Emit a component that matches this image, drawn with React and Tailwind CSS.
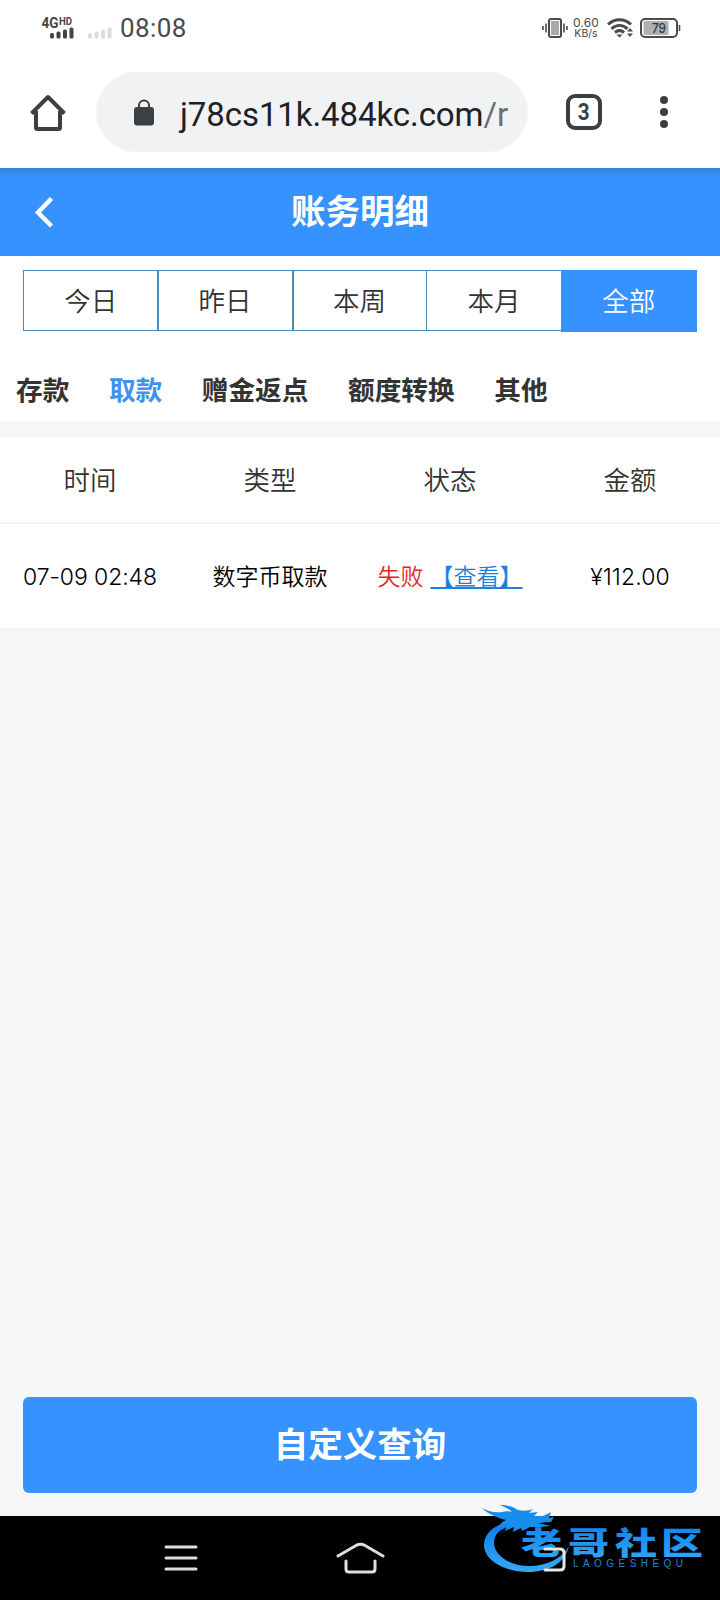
const RANGES = ["今日", "昨日", "本周", "本月", "全部"];
const TABS = ["存款", "取款", "赠金返点", "额度转换", "其他"];
const COLUMNS = ["时间", "类型", "状态", "金额"];

const RECORDS = [
    { id: 1, time: "07-09 02:48", type: "数字币取款", status: "失败", amount: "¥112.00" },
];

function StatusBar() {
    return (
        <div className="flex h-14 items-center justify-between pl-[41px] pr-[39px] text-[#4a4a4a]">
            <div className="flex items-center">
                {/* Network type and signal of both SIM cards */}
                <svg width="72" height="24" viewBox="0 0 72 24" fill="#444">
                    <text x="0.5" y="12" fontSize="14" fontWeight="700" fontFamily="Roboto, sans-serif" textLength="17" lengthAdjust="spacingAndGlyphs">4G</text>
                    <text x="18" y="9" fontSize="10" fontWeight="700" fontFamily="Roboto, sans-serif" textLength="13" lengthAdjust="spacingAndGlyphs">HD</text>
                    <rect x="9" y="17" width="4" height="5.5" rx="1.5" />
                    <rect x="15.5" y="15.5" width="4" height="7" rx="1.5" />
                    <rect x="22" y="13.5" width="4" height="9" rx="1.5" />
                    <rect x="28.5" y="11.5" width="4" height="11" rx="1.5" />
                    <g fill="#dcdcdc">
                        <rect x="47" y="17" width="4" height="5.5" rx="1.5" />
                        <rect x="53.5" y="15.5" width="4" height="7" rx="1.5" />
                        <rect x="60" y="13.5" width="4" height="9" rx="1.5" />
                        <rect x="66.5" y="11.5" width="4" height="11" rx="1.5" />
                    </g>
                </svg>
                <span className="ml-[7px] font-[Roboto,sans-serif] text-[26px] leading-none tracking-[0.4px]">08:08</span>
            </div>

            <div className="flex items-center">
                <svg width="26" height="20" viewBox="0 0 26 20" fill="none" stroke="#4a4a4a" strokeWidth="1.6">
                    <rect x="7" y="1" width="12" height="18" rx="2" strokeWidth="2" />
                    <rect x="9" y="3" width="8" height="14" fill="#aaa" stroke="none" />
                    <path d="M1 8v4M4 5.5v9M22 5.5v9M25 8v4" />
                </svg>
                <div className="ml-1 flex w-[28px] flex-col items-center font-[Inter,sans-serif] text-[10.5px] leading-[11px]">
                    <span className="text-[12px] tracking-[0.2px]">0.60</span>
                    <span>KB/s</span>
                </div>
                <svg className="ml-[7px]" width="26" height="20" viewBox="0 0 26 20" fill="none" stroke="#4a4a4a" strokeWidth="3">
                    <path d="M1 6.5C8 .2 17 .2 24 6.5" />
                    <path d="M4.500 10.800c5-4.400 11-4.400 16 0" />
                    <path d="M8 14.500c3-2.500 6-2.500 9 0" />
                    <path d="M9.500 16.500h6l-3 3zM20 13.500l3-3.500 3 3.500zM20 15.500l3 3.500 3-3.500z" fill="#4a4a4a" stroke="none" />
                </svg>
                <svg className="ml-[7px]" width="41" height="20" viewBox="0 0 41 20">
                    <rect x="1" y="1" width="36" height="18" rx="4" fill="none" stroke="#4a4a4a" strokeWidth="2" />
                    <rect x="3.5" y="3" width="25" height="14" rx="1.5" fill="#b0b0b0" />
                    <path d="M39.5 7v6" stroke="#4a4a4a" strokeWidth="1.6" />
                    <text x="19" y="14.5" fontSize="13" fontFamily="Inter, sans-serif" textAnchor="middle" fill="#333" stroke="#333" strokeWidth="0.2" textLength="14" lengthAdjust="spacingAndGlyphs">79</text>
                </svg>
            </div>
        </div>
    );
}

function BrowserBar() {
    return (
        <div className="flex h-28 items-center pl-[30px] pr-[52px]">
            <svg width="36" height="37" viewBox="0 0 36 37" fill="none" stroke="#3c4043" strokeWidth="4" strokeLinejoin="round">
                <path d="M1.5 19.5 18 3l16.5 16.5" />
                <path d="M6 17v16.5a1.5 1.5 0 0 0 1.5 1.5h21a1.5 1.5 0 0 0 1.5-1.5V17" />
            </svg>

            <div className="ml-[30px] flex h-20 w-[432px] items-center rounded-full bg-[#f1f2f4] pl-[38px]">
                <svg width="20" height="27" viewBox="0 0 20 27">
                    <path d="M5 9V6.5a5 5 0 0 1 10 0V9" fill="none" stroke="#3c4043" strokeWidth="2" />
                    <rect y="8" width="20" height="18.5" rx="3" fill="#3c4043" />
                </svg>
                <span className="ml-[26px] whitespace-nowrap pt-1 font-[Roboto,sans-serif] text-[33px] leading-none tracking-[-0.08px] text-[#202124]">
                    j78cs11k.484kc.com<span className="text-[#6b6f73]">/r</span>
                </span>
            </div>

            <div className="ml-[38px] flex size-9 items-center justify-center rounded-[9px] border-4 border-[#3c4043] font-[Roboto,sans-serif] text-[23px] font-bold leading-none text-[#3c4043]">
                <span className="scale-x-90">3</span>
            </div>
            <div className="ml-auto flex flex-col gap-1">
                {[0, 1, 2].map((i) => (
                    <span key={i} className="size-2 rounded-full bg-[#3c4043]" />
                ))}
            </div>
        </div>
    );
}

function PageHeader() {
    return (
        <div className="grid h-[88px] grid-cols-[80px_1fr_80px] items-center bg-[#3592ff] bg-linear-to-b from-[#3383d8] via-[#3592ff] via-[10%] to-[#3592ff] text-white">
            <svg className="ml-[34px]" width="20" height="32" viewBox="0 0 20 32" fill="none" stroke="currentColor" strokeWidth="4.5">
                <path d="M17.5 2.5 4 16.5l13.5 13.5" />
            </svg>
            <h1 className="pb-[5px] text-center text-[34.5px] font-bold leading-none">账务明细</h1>
        </div>
    );
}

function Watermark() {
    return (
        <svg className="absolute bottom-4 right-4 overflow-visible" width="224" height="76" viewBox="0 0 224 76">
            <defs>
                <linearGradient id="mark" x1="0" y1="0" x2="0" y2="1">
                    <stop offset="0" stopColor="#087bee" />
                    <stop offset="1" stopColor="#35a9f5" />
                </linearGradient>
            </defs>
            {/* Dragon curled into a ring */}
            <path d="M30 14C14 16 4 26 4 37c0 16 22 27 44 27 21 0 37-9 41-26-7 12-21 20-40 20C28 58 14 46 14 35c0-9 6-15 18-17z" fill="url(#mark)" />
            <path d="M2 0c8 4 13 5 20 4 3-1 7-1 10 0-3-3-7-5-12-7 8 0 14 2 18 5 6 1 10 1 15-1l-4 4 9-1-4 4 9 0 8-4-2 6 5-1-3 5c-6 0-9 1-13 1l13 3c-8 1-15 1-21 1l-8 4-1-3-8 4 1-5-9 4 2-6-9 3c2-4 4-6 8-8C18 10 8 6 2 0z" fill="#178ded" />
            <g fontFamily="'Noto Sans CJK SC', sans-serif" fontSize="31" fontWeight="900" fill="url(#mark)">
                <text x="41" y="45.5" textLength="41" lengthAdjust="spacingAndGlyphs">老</text>
                <text x="88" y="45.5" textLength="41" lengthAdjust="spacingAndGlyphs">哥</text>
                <text x="135" y="45.5" textLength="42" lengthAdjust="spacingAndGlyphs">社</text>
                <text x="181" y="45.5" textLength="42" lengthAdjust="spacingAndGlyphs">区</text>
            </g>
            <text x="93" y="59" fontSize="10" fontFamily="'Liberation Sans', sans-serif" fill="#2585d3" textLength="110" lengthAdjust="spacing">
                LAOGESHEQU
            </text>
        </svg>
    );
}

function NavBar() {
    return (
        <div className="relative grid h-[84px] grid-cols-[361px_1fr] bg-black">
            <div className="flex items-center justify-center">
                <svg width="34" height="26" viewBox="0 0 34 26" stroke="#dedede" strokeWidth="3" strokeLinecap="round">
                    <path d="M2 2h30M2 13h30M2 24h30" />
                </svg>
            </div>
            <div className="flex items-center">
                <svg className="-ml-[25px]" width="49" height="32" viewBox="0 0 49 32" fill="none" stroke="#dedede" strokeWidth="3" strokeLinecap="round">
                    <path d="M2 14 20 3.5q4.5-2.5 9 0L47 14" />
                    <path d="M10 19v8q0 3 3 3h23q3 0 3-3v-8" />
                </svg>
            </div>
            <Watermark />
            {/* Back key, its right half shows over the mark */}
            <svg className="absolute left-[536px] top-[31px]" width="30" height="25" viewBox="0 0 30 25" fill="none" stroke="#e6e6e6" strokeWidth="3" strokeLinecap="round">
                <path d="M9 2h15q4 0 4 4v13q0 4-4 4H9" />
            </svg>
        </div>
    );
}

export default function App() {
    const activeRange = "全部";
    const activeTab = "取款";

    return (
        <div className="flex h-[1600px] w-[720px] flex-col overflow-hidden bg-white font-['Noto_Sans_CJK_SC',sans-serif] text-[#333]">
            <StatusBar />
            <BrowserBar />
            <PageHeader />

            {/* Date range */}
            <div className="mx-[23px] mt-[14px] grid h-[61px] grid-cols-5 border border-[#4a8cba] text-[26.5px] font-[350]">
                {RANGES.map((label, i) => (
                    <button
                        key={label}
                        className={
                            label === activeRange
                                ? "-mx-px -mt-px -mb-[2px] bg-[#3592ff] pb-[2px] text-white"
                                : i < 2
                                    ? "-mr-px border-r-2 border-[#4a8cba] pb-[2px]"
                                    : "border-r border-[#4a8cba] pb-[2px]"
                        }
                    >
                        {label}
                    </button>
                ))}
            </div>

            <div className="flex h-[91px] items-center gap-[39.500px] px-4 pt-[26px] text-[26.7px] font-bold leading-none">
                {TABS.map((label) => (
                    <span key={label} className={label === activeTab ? "text-[#3f92ee]" : ""}>{label}</span>
                ))}
            </div>

            <main className="flex flex-1 flex-col bg-[#f4f6f8] pt-[15px]">
                <div className="grid h-[87px] grid-cols-4 items-center border-b-2 border-[#f3f4f6] bg-white pb-[2px] text-center text-[26.5px] font-[350]">
                    {COLUMNS.map((label) => <span key={label}>{label}</span>)}
                </div>
                {RECORDS.map((r) => (
                    <div key={r.id} className="grid h-[104px] grid-cols-4 items-center whitespace-nowrap bg-white text-center text-[23px] font-[350] text-black">
                        <span className="pt-[2px] font-[Inter,sans-serif] tracking-[-0.1px]">{r.time}</span>
                        <span className="pb-[2px]">{r.type}</span>
                        <span className="pb-[2px]">
                            <span className="text-[#e02525]">{r.status}</span>
                            <a className="ml-[7px] text-[#1a82dc] underline decoration-2 underline-offset-2">【查看】</a>
                        </span>
                        <span className="pt-[2px] font-[Inter,sans-serif] tracking-[0.1px]">{r.amount}</span>
                    </div>
                ))}

                <button className="mx-[23px] mb-[23px] mt-auto h-24 rounded-md bg-[#3592ff] pb-[5px] text-[34.5px] font-bold text-white">
                    自定义查询
                </button>
            </main>

            <NavBar />
        </div>
    );
}
